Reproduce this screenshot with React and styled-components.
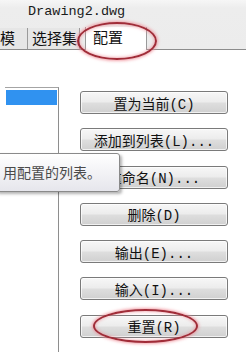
import React from "react";
import styled, { createGlobalStyle } from "styled-components";

const GlobalStyle = createGlobalStyle`
body {
    margin: 0;
    background: #ffffff;
}
`;

const Page = styled.div`
width: 246px;
height: 352px;
overflow: hidden;
position: relative;
background: #ffffff;
font-family: "Noto Sans CJK SC", sans-serif;
`;

const Header = styled.div`
background: linear-gradient(#f6f6f6 0px, #ededed 8px, #ececec 100%);
border-bottom: 1px solid #8c8c8c;
`;

const TitleBar = styled.div`
height: 27px;
box-sizing: border-box;
padding: 4px 0 0 28px;
font-family: "Liberation Mono", "Noto Sans CJK SC", monospace;
font-size: 13.5px;
line-height: 16px;
color: #1a1a1a;
`;

const TabRow = styled.div`
height: 22px;
display: flex;
align-items: flex-end;
`;

const Tab = styled.div`
height: ${p => (p.$active ? "23px" : "21px")};
width: ${p => p.$width}px;
margin-left: ${p => p.$offset || 0}px;
margin-bottom: ${p => (p.$active ? "-1px" : "0")};
box-sizing: border-box;
padding-left: ${p => p.$pad || 4}px;
background: ${p => (p.$active ? "#ffffff" : "#e6e6e6")};
border-right: 1px solid #9a9a9a;
border-left: ${p => (p.$active ? "1px solid #9a9a9a" : "none")};
font-size: 15px;
line-height: 20px;
color: #111;
white-space: nowrap;
`;

const Body = styled.div`
display: flex;
height: 302px;
`;

const ListPane = styled.div`
margin: 37px 0 0 5px;
width: 53px;
border-top: 1px solid #a4a4a4;
border-right: 1px solid #8e8e8e;
`;

const Selection = styled.div`
height: 15px;
margin: 2px 1px 0 1px;
background: #3092f0;
`;

const ButtonColumn = styled.div`
display: flex;
flex-direction: column;
gap: 14.3px;
padding: 41px 0 0 21px;
`;

const Button = styled.div`
width: 148px;
height: 23px;
box-sizing: border-box;
border: 1px solid #7a7a7a;
border-radius: 3px;
background: linear-gradient(#f7f7f7 0%, #ececec 48%, #dedede 52%, #d0d0d0 100%);
box-shadow: inset 0 0 0 1px rgba(255, 255, 255, 0.7);
display: flex;
align-items: center;
justify-content: center;
font-family: "Liberation Mono", "Noto Sans CJK SC", monospace;
font-size: 14px;
color: #111;
white-space: nowrap;
`;

const Tooltip = styled.div`
position: absolute;
left: -5px;
top: 153px;
width: 125px;
height: 39px;
box-sizing: border-box;
border: 1px solid #8a8a8a;
border-radius: 3px;
background: linear-gradient(#ffffff, #e6e6ec);
box-shadow: 2px 2px 3px rgba(0, 0, 0, 0.3);
padding: 9px 0 0 7px;
font-size: 14px;
line-height: 18px;
color: #4a4a4a;
white-space: nowrap;
`;

const Ring = styled.div`
position: absolute;
left: ${p => p.$x}px;
top: ${p => p.$y}px;
width: ${p => p.$w}px;
height: ${p => p.$h}px;
box-sizing: border-box;
border: 2px solid #a12c38;
border-radius: 50%;
box-shadow: 0 0 3px 1px rgba(240, 140, 150, 0.8), inset 0 0 3px 1px rgba(240, 140, 150, 0.6);
pointer-events: none;
`;

const buttons = [
    "置为当前(C)",
    "添加到列表(L)...",
    "重命名(N)...",
    "删除(D)",
    "输出(E)...",
    "输入(I)...",
    "重置(R)",
];

const App = () => {
    return (
        <Page>
            <GlobalStyle />
            <Header>
                <TitleBar>Drawing2.dwg</TitleBar>
                <TabRow>
                    <Tab $width={34} $offset={-6} $pad={6}>模</Tab>
                    <Tab $width={52}>选择集</Tab>
                    <Tab $width={62} $offset={5} $pad={7} $active>配置</Tab>
                </TabRow>
            </Header>
            <Body>
                <ListPane>
                    <Selection />
                </ListPane>
                <ButtonColumn>
                    {buttons.map(label => (
                        <Button key={label}>{label}</Button>
                    ))}
                </ButtonColumn>
            </Body>
            <Tooltip>用配置的列表。</Tooltip>
            <Ring $x={77} $y={22} $w={80} $h={38} />
            <Ring $x={93} $y={309} $w={105} $h={34} />
        </Page>
    );
};

export default App;
